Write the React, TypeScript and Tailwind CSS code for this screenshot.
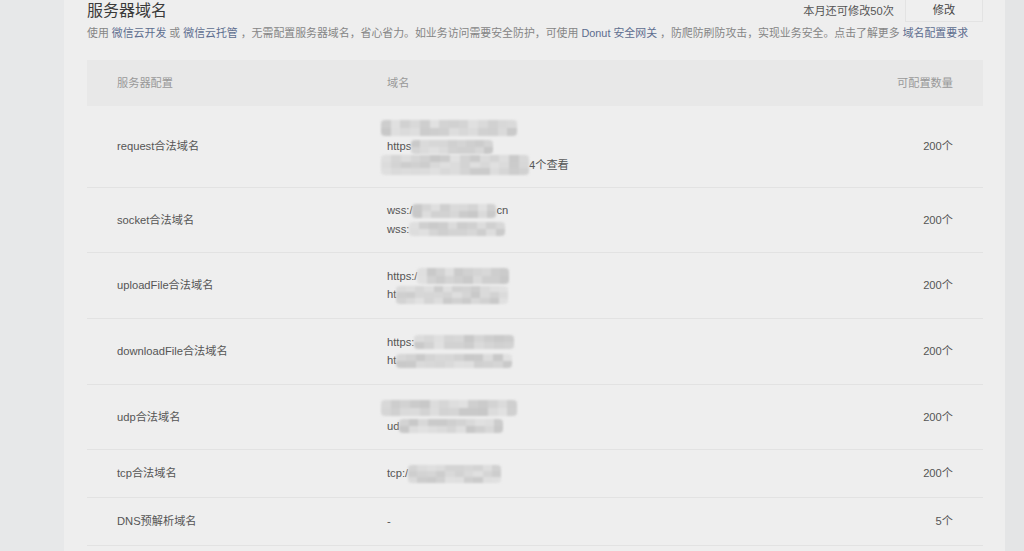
import React from 'react';

const FONT = { fontFamily: '"Liberation Sans", "Noto Sans CJK SC", sans-serif' };

function Mosaic({ w, h, seed, className = '' }: { w: number; h: number; seed: number; className?: string }) {
  const cols = Math.ceil(w / 10);
  const rows = Math.ceil(h / 8);
  const cells: string[] = [];
  let s = seed * 9301 + 49297;
  for (let i = 0; i < cols * rows; i++) {
    s = (s * 9301 + 49297) % 233280;
    const v = 200 + Math.floor((s / 233280) * 26);
    cells.push(`rgb(${v},${v},${v})`);
  }
  return (
    <span
      className={`inline-grid shrink-0 overflow-hidden rounded-[4px] blur-[1.2px] ${className}`}
      style={{ width: w, height: h, gridTemplateColumns: `repeat(${cols}, 1fr)` }}
    >
      {cells.map((c, i) => (
        <span key={i} style={{ backgroundColor: c }} />
      ))}
    </span>
  );
}

type Line = { pre?: string; blur?: number; blurH?: number; shift?: boolean; post?: string };

const rows: { name: string; h: string; lines: Line[]; count: string }[] = [
  {
    name: 'request合法域名',
    h: 'h-[82px]',
    lines: [
      { blur: 136, blurH: 16, shift: true },
      { pre: 'https', blur: 82, blurH: 14 },
      { blur: 148, blurH: 20, shift: true, post: '4个查看' },
    ],
    count: '200个',
  },
  {
    name: 'socket合法域名',
    h: 'h-[65px]',
    lines: [
      { pre: 'wss:/', blur: 84, blurH: 14, post: 'cn' },
      { pre: 'wss:', blur: 96, blurH: 14 },
    ],
    count: '200个',
  },
  {
    name: 'uploadFile合法域名',
    h: 'h-[66px]',
    lines: [
      { pre: 'https:/', blur: 92, blurH: 16 },
      { pre: 'ht', blur: 112, blurH: 18 },
    ],
    count: '200个',
  },
  {
    name: 'downloadFile合法域名',
    h: 'h-[66px]',
    lines: [
      { pre: 'https:', blur: 100, blurH: 14 },
      { pre: 'ht', blur: 116, blurH: 14 },
    ],
    count: '200个',
  },
  {
    name: 'udp合法域名',
    h: 'h-[65px]',
    lines: [
      { blur: 136, blurH: 16, shift: true },
      { pre: 'ud', blur: 104, blurH: 14 },
    ],
    count: '200个',
  },
  {
    name: 'tcp合法域名',
    h: 'h-[48px]',
    lines: [{ pre: 'tcp:/', blur: 93, blurH: 18 }],
    count: '200个',
  },
  {
    name: 'DNS预解析域名',
    h: 'h-[48px]',
    lines: [{ pre: '-' }],
    count: '5个',
  },
];

export default function App() {
  return (
    <div className="flex h-[551px] w-full overflow-hidden bg-[#e7e8e9]" style={FONT}>
      <div className="w-[64px] shrink-0" />

      <div className="w-[941px] shrink-0 bg-[#eeeeee] pl-[23px] pr-[22px]">
        {/* Title bar */}
        <div className="flex h-[22px] items-center justify-between">
          <h1 className="text-[16px] leading-none text-[#3a3a3a]">服务器域名</h1>
          <div className="flex h-full items-center">
            <span className="mr-[11px] text-[11.2px] text-[#555]">本月还可修改50次</span>
            <button className="h-[22px] w-[78px] border border-t-0 border-[#e3e3e3] bg-[#efefef] text-[11.2px] text-[#444]">
              修改
            </button>
          </div>
        </div>

        <p className="mt-[4px] whitespace-nowrap text-[10.9px] leading-[14px] text-[#858585]">
          使用 <span className="text-[#5d6d8e]">微信云开发</span> 或{' '}
          <span className="text-[#5d6d8e]">微信云托管</span> ，无需配置服务器域名，省心省力。如业务访问需要安全防护，可使用{' '}
          <span className="text-[#5d6d8e]">Donut 安全网关</span> ，防爬防刷防攻击，实现业务安全。点击了解更多{' '}
          <span className="text-[#5d6d8e]">域名配置要求</span>
        </p>

        {/* Table */}
        <div className="mt-[20px] text-[11.2px] text-[#555]">
          <div className="flex h-[46px] items-center bg-[#e8e8e8] text-[#999]">
            <div className="w-[300px] shrink-0 pl-[30px]">服务器配置</div>
            <div className="flex-1">域名</div>
            <div className="pr-[30px]">可配置数量</div>
          </div>

          {rows.map((r, ri) => (
            <div key={r.name} className={`flex items-center border-b border-[#e2e2e2] ${r.h}`}>
              <div className="w-[300px] shrink-0 pl-[30px]">{r.name}</div>
              <div className="flex flex-1 flex-col">
                {r.lines.map((l, li) => (
                  <div key={li} className="flex h-[18.5px] items-center">
                    {l.pre && <span>{l.pre}</span>}
                    {l.blur && (
                      <Mosaic
                        w={l.blur}
                        h={l.blurH ?? 14}
                        seed={ri * 7 + li + 3}
                        className={l.shift ? '-ml-[6px]' : ''}
                      />
                    )}
                    {l.post && <span>{l.post}</span>}
                  </div>
                ))}
              </div>
              <div className="pr-[30px] text-right">{r.count}</div>
            </div>
          ))}
        </div>
      </div>

      <div className="flex-1 bg-[#e4e5e6]" />
    </div>
  );
}
